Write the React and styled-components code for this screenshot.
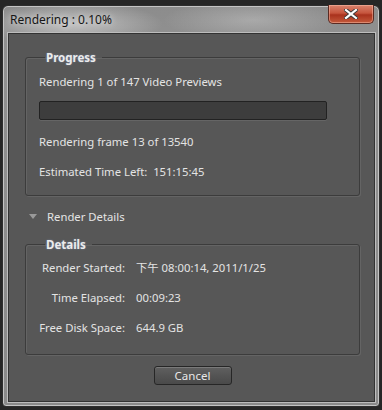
import styled, { createGlobalStyle } from 'styled-components'

const GlobalStyle = createGlobalStyle`
  html, body {
    margin: 0;
    padding: 0;
    background: #262626;
  }
  body {
    font-family: "Noto Sans", "Noto Sans CJK TC", sans-serif;
    font-size: 11.3px;
  }
`

const Window = styled.div`
  box-sizing: border-box;
  width: 378px;
  height: 402px;
  margin: 5px 0 0 2px;
  border: 1px solid #2e2e2e;
  border-radius: 6px 6px 4px 4px;
  background:
    radial-gradient(ellipse 90px 22px at 70px 18px, rgba(235, 235, 235, 0.55) 0%, transparent 100%),
    radial-gradient(ellipse 90px 20px at 250px 14px, rgba(220, 220, 220, 0.35) 0%, transparent 100%),
    linear-gradient(180deg, #8c8c8c 0%, #909090 30px, #8a8a8a 100%);
  box-shadow: inset 0 0 0 1px #c4c4c4;
  display: flex;
  flex-direction: column;
  position: relative;
`

const TitleBar = styled.div`
  height: 27px;
  display: flex;
  align-items: center;
  padding-left: 7px;
  font-size: 12px;
  color: #161616;
  text-shadow: 0 0 6px rgba(255, 255, 255, 0.8);
`

const CloseButton = styled.div`
  position: absolute;
  top: -1px;
  right: 5px;
  width: 46px;
  height: 19px;
  box-sizing: border-box;
  border: 1px solid #5a2a22;
  border-top: none;
  border-radius: 0 0 5px 5px;
  background: linear-gradient(180deg, #d9836e 0%, #c6553d 45%, #a9321d 55%, #c45a3c 100%);
  box-shadow: inset 0 0 0 1px rgba(255, 200, 180, 0.45);
  display: flex;
  align-items: center;
  justify-content: center;
`

const Content = styled.div`
  flex: 1;
  margin: 0 4px 4px 5px;
  background: #575757;
  border: 1px solid #333;
  box-shadow: 0 0 0 1px #bdbdbd;
  display: flex;
  flex-direction: column;
  padding: 16px 14px 0 16px;
  color: #e4e4e4;
`

const Group = styled.fieldset`
  margin: ${p => p.$top || 0}px 0 0;
  padding: ${p => p.$padding};
  border: 1px solid #3c3c3c;
  border-radius: 3px;
  box-shadow: 1px 1px 0 #646464, inset 1px 1px 0 #646464;
  display: flex;
  flex-direction: column;
  height: ${p => p.$height}px;
  box-sizing: border-box;
`

const Legend = styled.legend`
  padding: 0 6px 0 1px;
  margin-left: 6px;
  font-weight: bold;
  font-size: 11.5px;
  color: #ececec;
  text-shadow: 0 0 2px rgba(160, 190, 255, 0.45);
`

const Line = styled.div`
  height: 15px;
  line-height: 15px;
  margin-top: ${p => p.$top || 0}px;
  white-space: nowrap;
`

const ProgressTrack = styled.div`
  width: 288px;
  height: 19px;
  box-sizing: border-box;
  margin-top: ${p => p.$top}px;
  background: #3d3d3d;
  border: 1px solid #222;
  border-radius: 2px;
  box-shadow: 0 1px 0 #656565;
`

const Expander = styled.div`
  display: flex;
  align-items: center;
  height: 15px;
  margin: 13px 0 0 4px;
  gap: 10px;
`

const Triangle = styled.div`
  width: 0;
  height: 0;
  border-left: 4px solid transparent;
  border-right: 4px solid transparent;
  border-top: 5px solid #9a9a9a;
`

const DetailGrid = styled.div`
  display: grid;
  grid-template-columns: 86px auto;
  column-gap: 11px;
  row-gap: 15px;
  margin-top: ${p => p.$top}px;
`

const Label = styled.div`
  text-align: right;
  height: 15px;
  line-height: 15px;
  white-space: nowrap;
`

const Value = styled.div`
  height: 15px;
  line-height: 15px;
  white-space: nowrap;
`

const Footer = styled.div`
  display: flex;
  justify-content: center;
  padding-top: 11px;
`

const Button = styled.button`
  width: 78px;
  height: 19px;
  box-sizing: border-box;
  padding: 0;
  font-family: inherit;
  font-size: 11.5px;
  color: #e8e8e8;
  background: linear-gradient(180deg, #606060 0%, #545454 50%, #4a4a4a 100%);
  border: 1px solid #262626;
  border-radius: 3px;
  box-shadow: inset 0 1px 0 #7a7a7a;
  line-height: 15px;
`

const details = [
  ['Render Started:', '下午 08:00:14, 2011/1/25'],
  ['Time Elapsed:', '00:09:23'],
  ['Free Disk Space:', '644.9 GB']
]

const App = () => (
  <>
    <GlobalStyle />
    <Window>
      <TitleBar>Rendering : 0.10%</TitleBar>
      <CloseButton>
        <svg width="14" height="10" viewBox="0 0 14 10">
          <path d="M2 1 L12 9 M12 1 L2 9" stroke="#3a3a3a" strokeWidth="4" strokeLinecap="square" />
          <path d="M2 1 L12 9 M12 1 L2 9" stroke="#fff" strokeWidth="2.2" strokeLinecap="square" />
        </svg>
      </CloseButton>
      <Content>
        <Group $height={146} $padding="9px 0 0 13px">
          <Legend>Progress</Legend>
          <Line>Rendering 1 of 147 Video Previews</Line>
          <ProgressTrack $top={12} />
          <Line $top={14}>Rendering frame 13 of 13540</Line>
          <Line $top={15}>Estimated Time Left:&nbsp; 151:15:45</Line>
        </Group>
        <Expander>
          <Triangle />
          <span>Render Details</span>
        </Expander>
        <Group $top={13} $height={118} $padding="0 0 0 13px">
          <Legend>Details</Legend>
          <DetailGrid $top={8}>
            {details.map(([label, value]) => (
              <>
                <Label key={label}>{label}</Label>
                <Value key={value}>{value}</Value>
              </>
            ))}
          </DetailGrid>
        </Group>
        <Footer>
          <Button>Cancel</Button>
        </Footer>
      </Content>
    </Window>
  </>
)

export default App
